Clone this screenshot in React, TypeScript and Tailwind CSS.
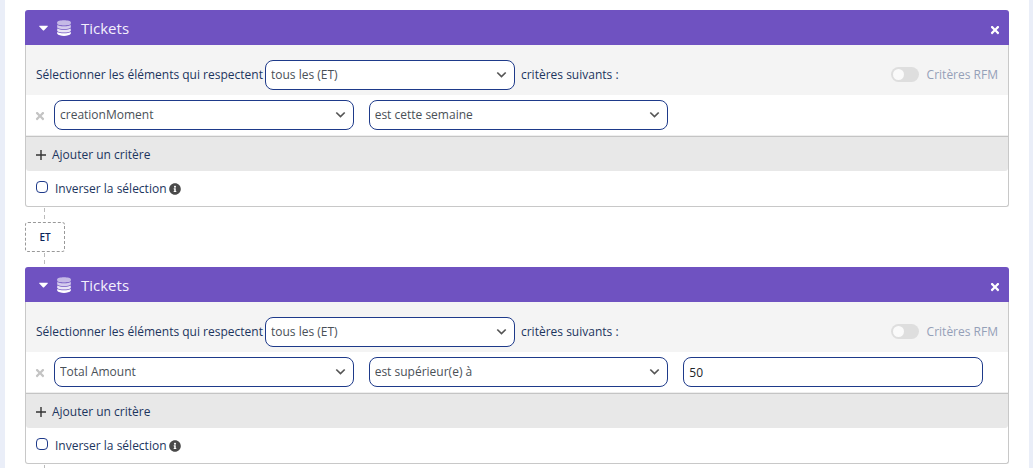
import { useId, useState } from 'react';
import type { ReactNode } from 'react';
import clsx from 'clsx';
import { FaCaretDown, FaInfoCircle, FaTimes } from 'react-icons/fa';

interface Criterion {
  field: string;
  operator: string;
  value?: string;
}

interface Group {
  id: number;
  title: string;
  criteria: Criterion[];
}

const GROUPS: Group[] = [
  { id: 1, title: 'Tickets', criteria: [{ field: 'creationMoment', operator: 'est cette semaine' }] },
  { id: 2, title: 'Tickets', criteria: [{ field: 'Total Amount', operator: 'est supérieur(e) à', value: '50' }] },
];

const MATCH_OPTIONS = ['tous les (ET)', 'au moins un des (OU)'];
const FIELDS = ['creationMoment', 'Total Amount'];
const OPERATORS = ['est cette semaine', 'est supérieur(e) à'];

/* Stack of discs, fading towards the top */
function DatabaseIcon() {
  return (
    <svg width="14" height="16" viewBox="0 0 14 16" fill="white" aria-hidden="true">
      <path d="M.2 2.300C.2 1 3.300.3 7 .3s6.800.7 6.800 2v1.400C13.800 4.800 10.700 5.400 7 5.400S.2 4.800.2 3.700z" opacity="0.6" />
      <path d="M.2 5C1.800 6 4 6.200 7 6.200s5.200-.2 6.800-1.200v2.500C12.800 8.600 10 9 7 9S1.200 8.600.2 7.500z" opacity="0.7" />
      <path d="M.2 8.600C1.800 9.600 4 9.800 7 9.800s5.200-.2 6.800-1.200v2.400C12.800 12.100 10 12.500 7 12.500S1.200 12.100.2 11z" opacity="0.85" />
      <path d="M.2 12.100C1.800 13.100 4 13.300 7 13.300s5.200-.2 6.800-1.200v1.700C12.800 15.300 10 15.900 7 15.900S1.200 15.300.2 13.800z" />
    </svg>
  );
}

interface SelectBoxProps {
  label: string;
  options: string[];
  initial: string;
  className?: string;
}

function SelectBox({ label, options, initial, className }: SelectBoxProps) {
  const [value, setValue] = useState(initial);
  return (
    <div className={clsx('relative min-w-0', className)}>
      <select
        aria-label={label}
        value={value}
        onChange={(e) => setValue(e.target.value)}
        className="block h-[30px] w-full appearance-none rounded-lg border border-[#1e3a8a] bg-white px-[5px] text-[#495057]"
      >
        {options.map((o) => (
          <option key={o}>{o}</option>
        ))}
      </select>
      <svg
        className="pointer-events-none absolute top-[10px] right-2 text-[#555]"
        width="11"
        height="10"
        viewBox="0 0 11 10"
        fill="none"
        stroke="currentColor"
        strokeWidth="1.7"
        aria-hidden="true"
      >
        <path d="M1.300 2.500l4.200 4L9.700 2.500" />
      </svg>
    </div>
  );
}

function CriterionRow({ criterion }: { criterion: Criterion }) {
  const [value, setValue] = useState(criterion.value ?? '');
  return (
    <div className="flex items-center border-b border-[#eee] pt-[5px] pr-[25px] pb-[5px] pl-2">
      <button type="button" aria-label="Supprimer le critère" className="mt-0.5 mr-2 flex h-3 w-3 items-center justify-center text-[#c4c4c4]">
        <FaTimes size={12} />
      </button>
      <div className="grid min-w-0 flex-1 grid-cols-3 gap-[15px]">
        <SelectBox label="Champ" options={FIELDS} initial={criterion.field} />
        <SelectBox label="Opérateur" options={OPERATORS} initial={criterion.operator} />
        {criterion.value !== undefined && (
          <input
            type="text"
            aria-label="Valeur"
            value={value}
            onChange={(e) => setValue(e.target.value)}
            className="h-[30px] w-full min-w-0 rounded-lg border border-[#1e3a8a] bg-white px-[5px] text-[#212529]"
          />
        )}
      </div>
    </div>
  );
}

function GroupPanel({ group }: { group: Group }) {
  const id = useId();
  const [rfm, setRfm] = useState(false);
  const [inverted, setInverted] = useState(false);

  return (
    <section>
      <header className="flex h-[35px] items-center rounded-t-[3px] bg-[#6f52c1] px-[10px] text-white">
        <button type="button" aria-label="Replier" className="flex w-4 justify-center">
          <FaCaretDown size={15} />
        </button>
        <span className="ml-[6px]">
          <DatabaseIcon />
        </span>
        <h2 className="ml-[10px] text-[15px] text-[#f3effc]">{group.title}</h2>
        <button type="button" aria-label="Fermer" className="mt-1 ml-auto">
          <FaTimes size={12} className="-mr-0.5" />
        </button>
      </header>

      <div className="rounded-b-[3px] border border-t-0 border-[#c8c8c8]">
        <div className="flex h-[50px] items-center bg-[#f4f4f4] px-[10px] pt-[10px] pb-[1px]">
          <span className="whitespace-nowrap">Sélectionner les éléments qui respectent</span>
          <SelectBox label="Combinaison" options={MATCH_OPTIONS} initial={MATCH_OPTIONS[0]} className="mr-[6px] ml-0.5 w-[250px]" />
          <span className="whitespace-nowrap">critères suivants :</span>
          <label htmlFor={`${id}-rfm`} className="ml-auto flex items-center gap-2 whitespace-nowrap text-[#94a0b8]">
            <input
              id={`${id}-rfm`}
              type="checkbox"
              role="switch"
              checked={rfm}
              onChange={(e) => setRfm(e.target.checked)}
              className="h-[15px] w-7 appearance-none rounded-full bg-[#dedede] p-[2px] before:block before:h-[11px] before:w-[11px] before:rounded-full before:bg-[#fafafa] checked:bg-[#6f52c1] checked:before:ml-auto"
            />
            Critères RFM
          </label>
        </div>

        {group.criteria.map((c) => (
          <CriterionRow key={c.field} criterion={c} />
        ))}

        <button
          type="button"
          className="flex h-[35px] w-full items-center gap-[6px] rounded-b-[3px] border-t border-[#c4c4c4] bg-[#e8e8e8] px-[10px] pt-0.5"
        >
          <svg width="10" height="10" viewBox="0 0 10 10" stroke="#333" strokeWidth="1.4" aria-hidden="true">
            <path d="M5 0v10M0 5h10" />
          </svg>
          Ajouter un critère
        </button>

        <div className="flex h-[35px] items-center px-[10px]">
          <input
            id={`${id}-invert`}
            type="checkbox"
            checked={inverted}
            onChange={(e) => setInverted(e.target.checked)}
            className="mr-[7px] mb-1 h-3 w-3 appearance-none rounded-[4px] border border-[#1e3a8a] bg-white checked:bg-[#1e3a8a]"
          />
          <label htmlFor={`${id}-invert`}>Inverser la sélection</label>
          <FaInfoCircle size={12} className="ml-0.5 text-[#4a4a4a]" />
        </div>
      </div>
    </section>
  );
}

/* Dashed link between two groups */
function Connector({ className }: { className: string }) {
  return (
    <div
      className={clsx(
        'ml-[19px] w-px bg-[repeating-linear-gradient(to_bottom,transparent_0_1px,#bbb_1px_5px,transparent_5px_7px)]',
        className,
      )}
    />
  );
}

function Operator({ children }: { children: ReactNode }) {
  return (
    <div>
      <Connector className="h-[15px]" />
      <button
        type="button"
        className="flex h-[30px] w-10 items-center justify-center rounded-[3px] border border-dashed border-[#999] text-[10px] font-semibold text-[#0b2559]"
      >
        {children}
      </button>
      <Connector className="h-[15px]" />
    </div>
  );
}

export default function App() {
  return (
    <div className="flex min-h-screen bg-[#eaeef8] pr-1 pl-[5px] font-['Open_Sans','Noto_Sans',sans-serif] text-xs leading-5 text-[#1c355e]">
      <main className="flex min-w-0 flex-1 flex-col bg-white px-5 pt-[10px]">
        {GROUPS.map((group, i) => (
          <div key={group.id}>
            {i > 0 && <Operator>ET</Operator>}
            <GroupPanel group={group} />
          </div>
        ))}
        <Connector className="flex-1" />
      </main>
    </div>
  );
}
